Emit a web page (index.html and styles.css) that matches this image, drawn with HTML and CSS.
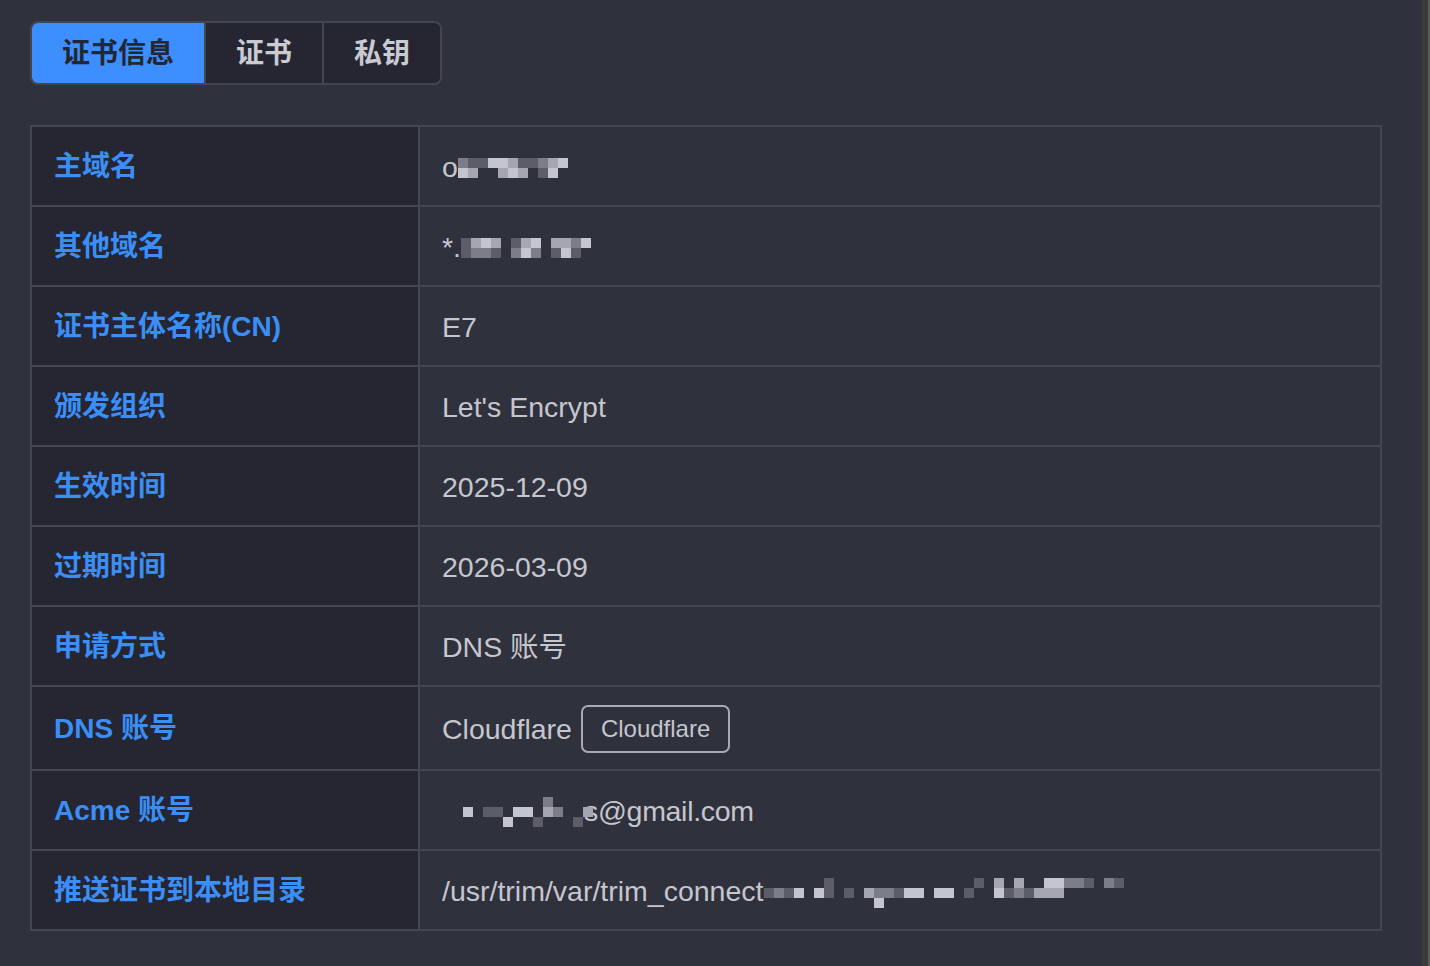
FILE: index.html
```html
<!DOCTYPE html>
<html lang="zh-CN">
<head>
<meta charset="utf-8">
<title>证书信息</title>
<link rel="stylesheet" href="styles.css">
</head>
<body>
<div class="app">
  <main class="main">
    <nav class="tabs">
      <button class="tab active">证书信息</button>
      <button class="tab">证书</button>
      <button class="tab">私钥</button>
    </nav>

    <div class="info">
      <div class="label">主域名</div>
      <div class="value">o<span class="mosaic m11"><i class="k2"></i><i class="k1"></i><i class="k1"></i><i class="k4"></i><i class="k4"></i><i class="k3"></i><i class="k1"></i><i class="k1"></i><i class="k2"></i><i class="k3"></i><i class="k4"></i><i class="k4"></i><i class="k3"></i><i class="k0"></i><i class="k0"></i><i class="k3"></i><i class="k4"></i><i class="k3"></i><i class="k0"></i><i class="k1"></i><i class="k4"></i><i class="k0"></i></span></div>

      <div class="label">其他域名</div>
      <div class="value">*.<span class="mosaic m13"><i class="k1"></i><i class="k3"></i><i class="k4"></i><i class="k3"></i><i class="k0"></i><i class="k1"></i><i class="k3"></i><i class="k4"></i><i class="k0"></i><i class="k3"></i><i class="k3"></i><i class="k2"></i><i class="k4"></i><i class="k1"></i><i class="k2"></i><i class="k2"></i><i class="k1"></i><i class="k0"></i><i class="k2"></i><i class="k4"></i><i class="k2"></i><i class="k0"></i><i class="k1"></i><i class="k4"></i><i class="k1"></i><i class="k0"></i></span></div>

      <div class="label">证书主体名称(CN)</div>
      <div class="value">E7</div>

      <div class="label">颁发组织</div>
      <div class="value">Let's Encrypt</div>

      <div class="label">生效时间</div>
      <div class="value">2025-12-09</div>

      <div class="label">过期时间</div>
      <div class="value">2026-03-09</div>

      <div class="label">申请方式</div>
      <div class="value">DNS 账号</div>

      <div class="label">DNS 账号</div>
      <div class="value">Cloudflare<span class="tag">Cloudflare</span></div>

      <div class="label">Acme 账号</div>
      <div class="value"><span class="mosaic m13 pad"><i class="k0"></i><i class="k0"></i><i class="k0"></i><i class="k0"></i><i class="k0"></i><i class="k0"></i><i class="k0"></i><i class="k0"></i><i class="k2"></i><i class="k0"></i><i class="k0"></i><i class="k0"></i><i class="k0"></i><i class="k4"></i><i class="k0"></i><i class="k1"></i><i class="k1"></i><i class="k0"></i><i class="k4"></i><i class="k4"></i><i class="k0"></i><i class="k3"></i><i class="k2"></i><i class="k0"></i><i class="k0"></i><i class="k3"></i><i class="k0"></i><i class="k0"></i><i class="k0"></i><i class="k0"></i><i class="k4"></i><i class="k0"></i><i class="k0"></i><i class="k1"></i><i class="k0"></i><i class="k0"></i><i class="k0"></i><i class="k1"></i><i class="k0"></i></span><span class="email">s@gmail.com</span></div>

      <div class="label">推送证书到本地目录</div>
      <div class="value">/usr/trim/var/trim_connect<span class="mosaic m36"><i class="k0"></i><i class="k0"></i><i class="k0"></i><i class="k0"></i><i class="k0"></i><i class="k0"></i><i class="k1"></i><i class="k0"></i><i class="k0"></i><i class="k0"></i><i class="k0"></i><i class="k0"></i><i class="k0"></i><i class="k0"></i><i class="k0"></i><i class="k0"></i><i class="k0"></i><i class="k0"></i><i class="k0"></i><i class="k0"></i><i class="k0"></i><i class="k1"></i><i class="k0"></i><i class="k3"></i><i class="k0"></i><i class="k3"></i><i class="k0"></i><i class="k0"></i><i class="k4"></i><i class="k4"></i><i class="k2"></i><i class="k2"></i><i class="k1"></i><i class="k0"></i><i class="k2"></i><i class="k1"></i><i class="k1"></i><i class="k2"></i><i class="k1"></i><i class="k4"></i><i class="k0"></i><i class="k4"></i><i class="k1"></i><i class="k0"></i><i class="k1"></i><i class="k0"></i><i class="k3"></i><i class="k2"></i><i class="k2"></i><i class="k1"></i><i class="k4"></i><i class="k4"></i><i class="k0"></i><i class="k4"></i><i class="k4"></i><i class="k0"></i><i class="k1"></i><i class="k0"></i><i class="k0"></i><i class="k4"></i><i class="k1"></i><i class="k2"></i><i class="k1"></i><i class="k3"></i><i class="k3"></i><i class="k3"></i><i class="k0"></i><i class="k0"></i><i class="k0"></i><i class="k0"></i><i class="k0"></i><i class="k0"></i><i class="k0"></i><i class="k0"></i><i class="k0"></i><i class="k0"></i><i class="k0"></i><i class="k0"></i><i class="k0"></i><i class="k0"></i><i class="k0"></i><i class="k0"></i><i class="k0"></i><i class="k4"></i></span></div>
    </div>
  </main>
  <div class="edge"></div>
</div>
</body>
</html>
```

FILE: styles.css
```css
* { box-sizing: border-box; }

html, body {
  margin: 0;
  height: 100%;
  background: #2f313d;
}

body {
  font-family: "Liberation Sans", "Noto Sans CJK SC", sans-serif;
  color: #c5c6ce;
  overflow: hidden;
}

.app {
  display: flex;
  height: 100%;
}

.main {
  flex: 1;
  padding: 21px 40px 0 30px;
}

.edge {
  width: 8px;
  background: linear-gradient(to right, #3c3b3b 0, #3c3b3b 6px, #5c5c5c 6px);
}

/* Tabs */
.tabs {
  display: inline-flex;
  height: 64px;
  border: 2px solid #44464f;
  border-radius: 8px;
  overflow: hidden;
  background: #252631;
}

.tab {
  font-family: "Liberation Sans", "Noto Sans CJK SC", sans-serif;
  font-size: 28px;
  font-weight: 700;
  color: #c9cad2;
  background: #252631;
  border: 0;
  border-left: 2px solid #44464f;
  padding: 1px 30px 0;
  margin: 0;
  line-height: 60px;
}

.tab:first-child { border-left: 0; }

.tab.active {
  background: #3d8eff;
  color: #242632;
  margin: -2px 0 -2px -2px;
  padding: 3px 30px 2px 32px;
}

/* Info table */
.info {
  margin-top: 40px;
  display: grid;
  grid-template-columns: 386px 1fr;
  gap: 2px;
  padding: 2px;
  background: #45474f;
}

.label, .value {
  min-height: 78px;
  padding: 18px 22px 16px;
  display: flex;
  align-items: center;
  font-size: 28px;
  line-height: 44px;
  white-space: nowrap;
}

.label {
  background: #252631;
  color: #3b8ef6;
  font-weight: 700;
}

.value {
  background: #2f313c;
  color: #c5c6ce;
  font-size: 28.5px;
}

.tag {
  display: inline-flex;
  align-items: center;
  height: 48px;
  margin-left: 9px;
  padding: 0 18px;
  border: 2px solid #a8a9b2;
  border-radius: 7px;
  font-size: 24px;
  color: #c4c5cd;
}

.email { letter-spacing: -0.3px; }

/* Pixelated (redacted) text */
.mosaic {
  display: inline-grid;
  grid-auto-rows: 10px;
  margin-top: 2px;
  z-index: 1;
}

.mosaic.pad { margin: 2px -9px 0 21px; }

.m11 { grid-template-columns: repeat(11, 10px); }
.m13 { grid-template-columns: repeat(13, 10px); }
.m36 { grid-template-columns: repeat(36, 10px); margin-top: 4px; }

.mosaic i { display: block; }
.k0 { background: transparent; }
.k1 { background: #5c5d69; }
.k2 { background: #7c7d89; }
.k3 { background: #a5a6b1; }
.k4 { background: #c4c5cf; }
```
